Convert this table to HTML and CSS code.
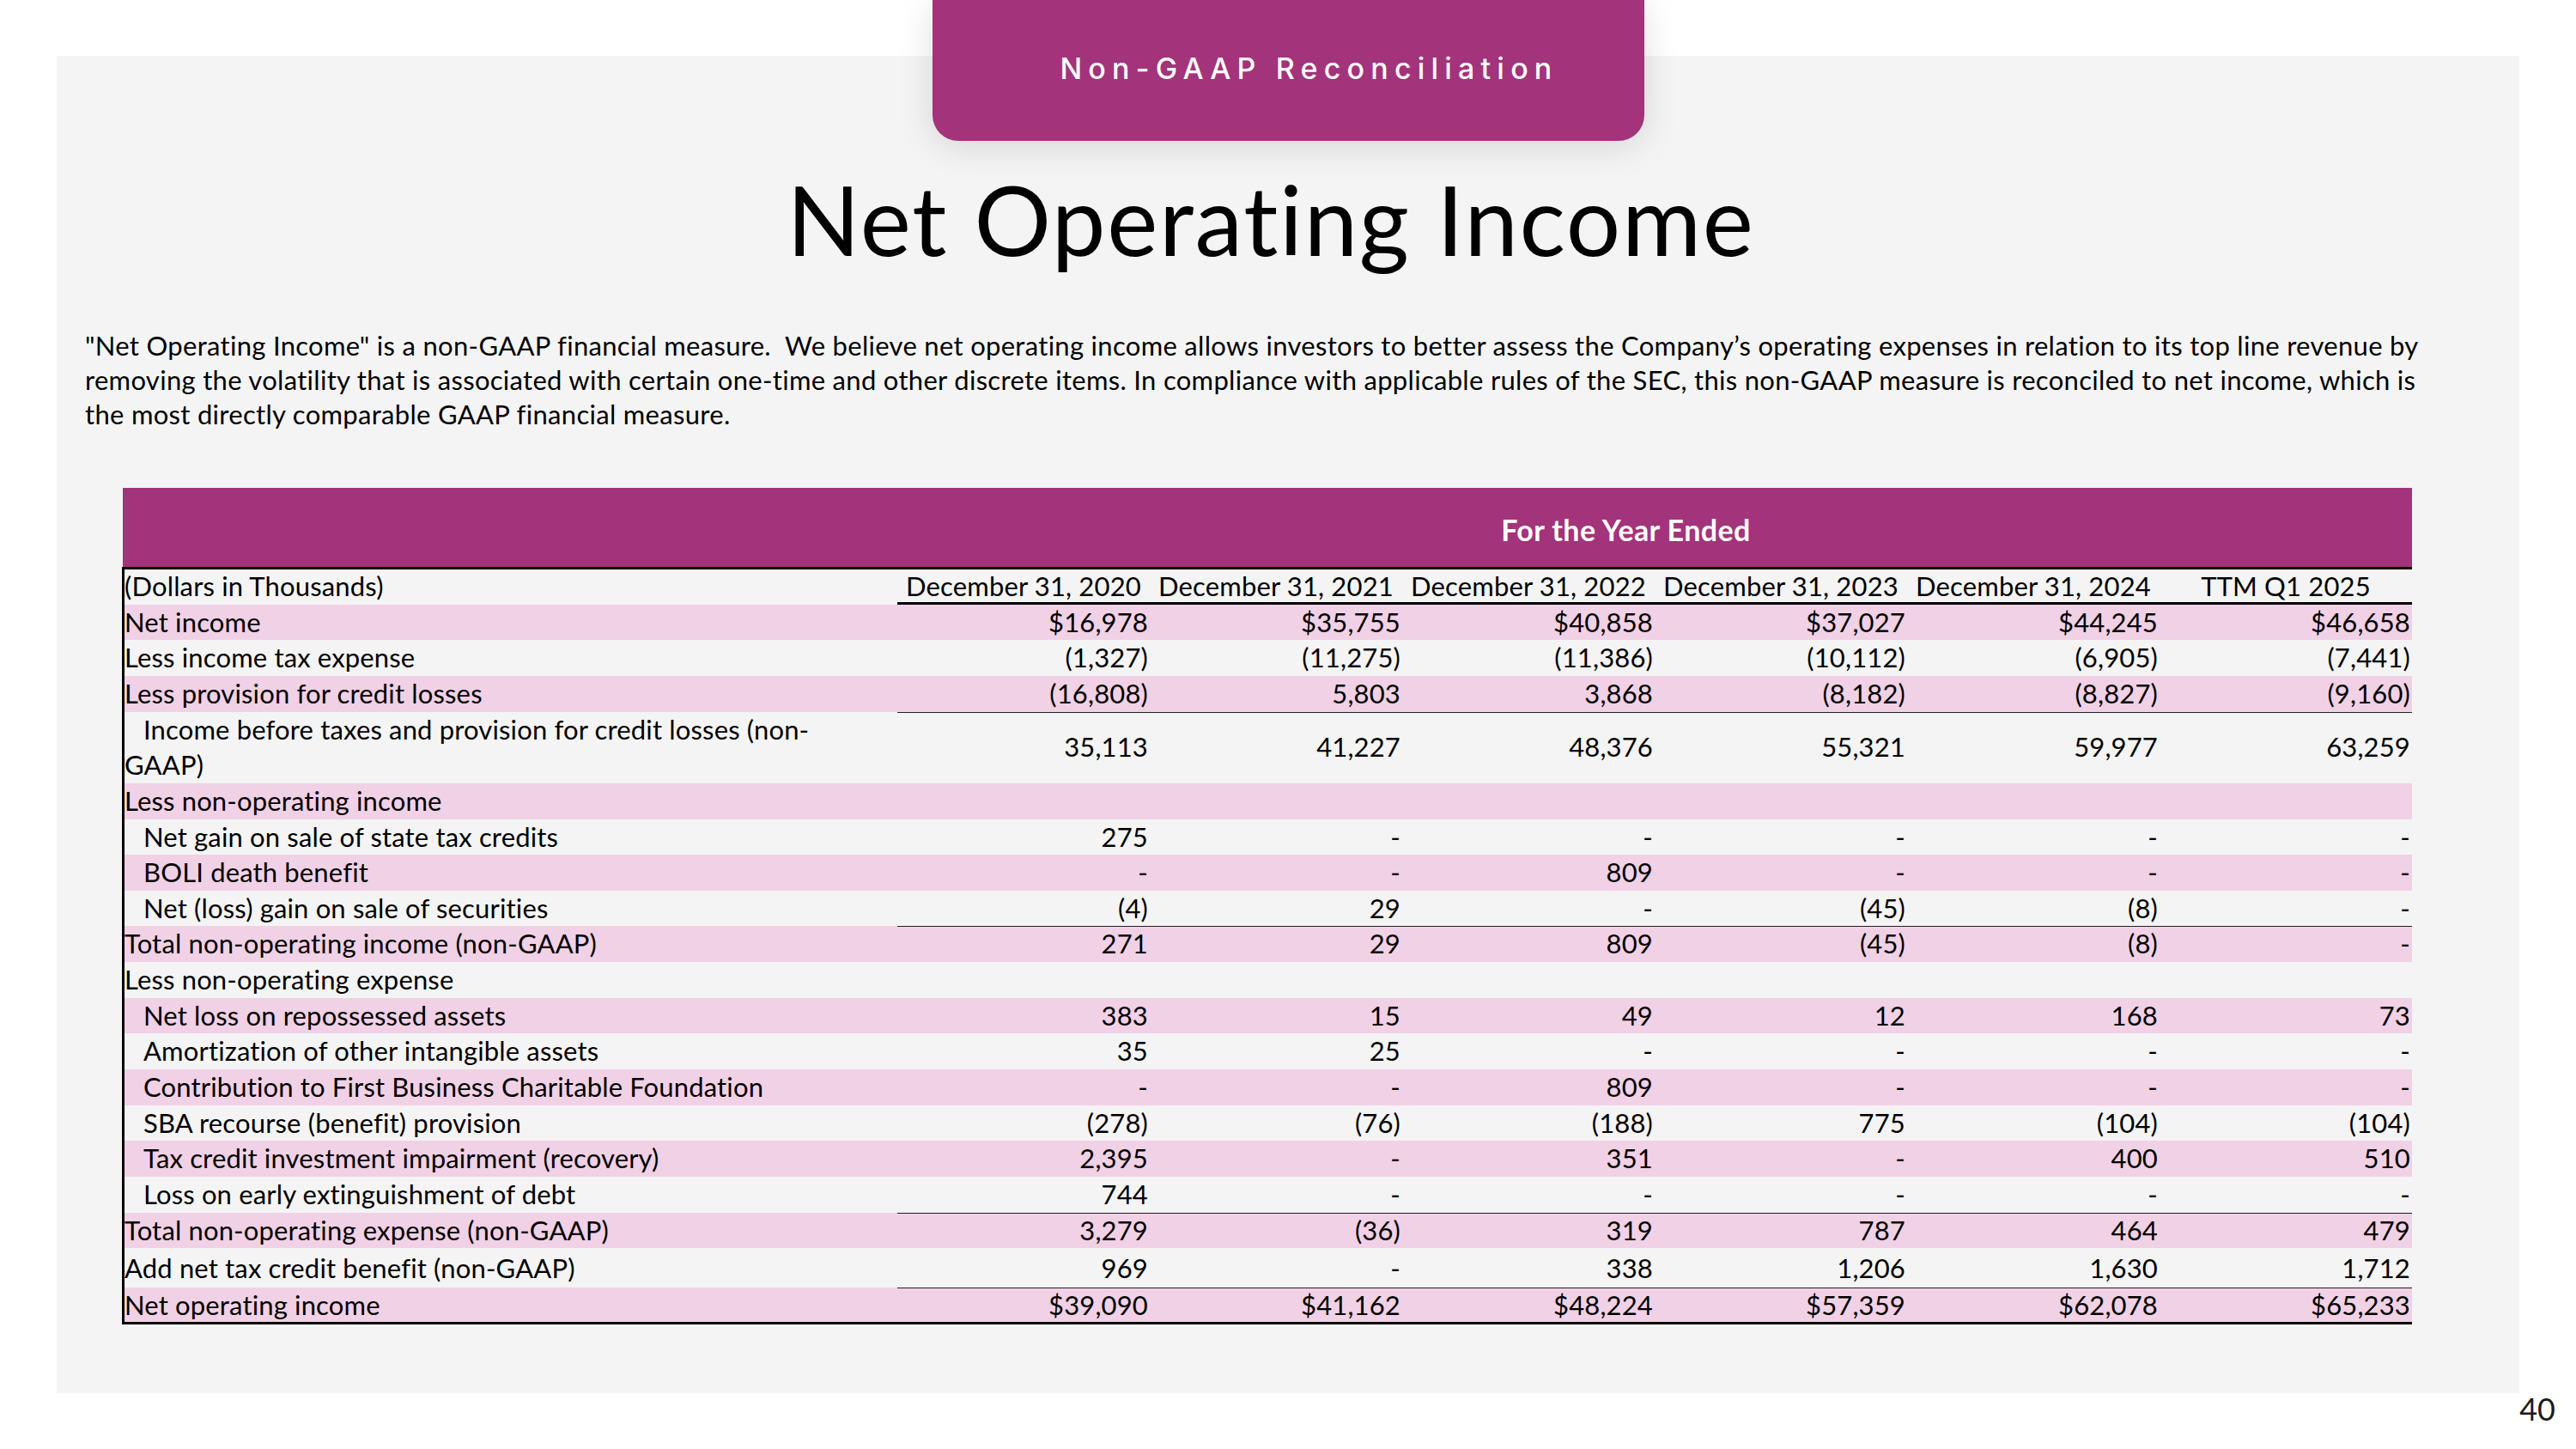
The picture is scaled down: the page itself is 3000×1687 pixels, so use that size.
FILE: index.html
```html
<!DOCTYPE html>
<html lang="en">
<head>
<meta charset="utf-8">
<title>Net Operating Income</title>
<link rel="stylesheet" href="styles.css">
</head>
<body>
<div class="slide">
  <div class="tab"><span class="tab-text">Non-GAAP Reconciliation</span></div>
  <section class="panel">
    <h1 class="title">Net Operating Income</h1>
    <p class="intro">"Net Operating Income" is a non-GAAP financial measure.&nbsp; We believe net operating income allows investors to better assess the Company’s operating expenses in relation to its top line revenue by<br>removing the volatility that is associated with certain one-time and other discrete items. In compliance with applicable rules of the SEC, this non-GAAP measure is reconciled to net income, which is<br>the most directly comparable GAAP financial measure.</p>
    <div class="recon">
      <div class="recon-band"><div class="band-title">For the Year Ended</div></div>
      <div class="recon-body">
        <div class="row cols">
          <div class="lbl">(Dollars in Thousands)</div>
          <div class="hdr">December 31, 2020</div>
          <div class="hdr">December 31, 2021</div>
          <div class="hdr">December 31, 2022</div>
          <div class="hdr">December 31, 2023</div>
          <div class="hdr">December 31, 2024</div>
          <div class="hdr">TTM Q1 2025</div>
        </div>
        <div class="row pink">
          <div class="lbl">Net income</div>
          <div class="num">$16,978</div><div class="num">$35,755</div><div class="num">$40,858</div><div class="num">$37,027</div><div class="num">$44,245</div><div class="num">$46,658</div>
        </div>
        <div class="row">
          <div class="lbl">Less income tax expense</div>
          <div class="num">(1,327)</div><div class="num">(11,275)</div><div class="num">(11,386)</div><div class="num">(10,112)</div><div class="num">(6,905)</div><div class="num">(7,441)</div>
        </div>
        <div class="row pink ul">
          <div class="lbl">Less provision for credit losses</div>
          <div class="num">(16,808)</div><div class="num">5,803</div><div class="num">3,868</div><div class="num">(8,182)</div><div class="num">(8,827)</div><div class="num">(9,160)</div>
        </div>
        <div class="row tall">
          <div class="lbl wrap">Income before taxes and provision for credit losses (non-<br>GAAP)</div>
          <div class="num">35,113</div><div class="num">41,227</div><div class="num">48,376</div><div class="num">55,321</div><div class="num">59,977</div><div class="num">63,259</div>
        </div>
        <div class="row pink">
          <div class="lbl">Less non-operating income</div>
          <div class="num"></div><div class="num"></div><div class="num"></div><div class="num"></div><div class="num"></div><div class="num"></div>
        </div>
        <div class="row">
          <div class="lbl ind">Net gain on sale of state tax credits</div>
          <div class="num">275</div><div class="num">-</div><div class="num">-</div><div class="num">-</div><div class="num">-</div><div class="num">-</div>
        </div>
        <div class="row pink">
          <div class="lbl ind">BOLI death benefit</div>
          <div class="num">-</div><div class="num">-</div><div class="num">809</div><div class="num">-</div><div class="num">-</div><div class="num">-</div>
        </div>
        <div class="row ul">
          <div class="lbl ind">Net (loss) gain on sale of securities</div>
          <div class="num">(4)</div><div class="num">29</div><div class="num">-</div><div class="num">(45)</div><div class="num">(8)</div><div class="num">-</div>
        </div>
        <div class="row pink">
          <div class="lbl">Total non-operating income (non-GAAP)</div>
          <div class="num">271</div><div class="num">29</div><div class="num">809</div><div class="num">(45)</div><div class="num">(8)</div><div class="num">-</div>
        </div>
        <div class="row">
          <div class="lbl">Less non-operating expense</div>
          <div class="num"></div><div class="num"></div><div class="num"></div><div class="num"></div><div class="num"></div><div class="num"></div>
        </div>
        <div class="row pink">
          <div class="lbl ind">Net loss on repossessed assets</div>
          <div class="num">383</div><div class="num">15</div><div class="num">49</div><div class="num">12</div><div class="num">168</div><div class="num">73</div>
        </div>
        <div class="row">
          <div class="lbl ind">Amortization of other intangible assets</div>
          <div class="num">35</div><div class="num">25</div><div class="num">-</div><div class="num">-</div><div class="num">-</div><div class="num">-</div>
        </div>
        <div class="row pink">
          <div class="lbl ind">Contribution to First Business Charitable Foundation</div>
          <div class="num">-</div><div class="num">-</div><div class="num">809</div><div class="num">-</div><div class="num">-</div><div class="num">-</div>
        </div>
        <div class="row">
          <div class="lbl ind">SBA recourse (benefit) provision</div>
          <div class="num">(278)</div><div class="num">(76)</div><div class="num">(188)</div><div class="num">775</div><div class="num">(104)</div><div class="num">(104)</div>
        </div>
        <div class="row pink">
          <div class="lbl ind">Tax credit investment impairment (recovery)</div>
          <div class="num">2,395</div><div class="num">-</div><div class="num">351</div><div class="num">-</div><div class="num">400</div><div class="num">510</div>
        </div>
        <div class="row ul">
          <div class="lbl ind">Loss on early extinguishment of debt</div>
          <div class="num">744</div><div class="num">-</div><div class="num">-</div><div class="num">-</div><div class="num">-</div><div class="num">-</div>
        </div>
        <div class="row pink">
          <div class="lbl">Total non-operating expense (non-GAAP)</div>
          <div class="num">3,279</div><div class="num">(36)</div><div class="num">319</div><div class="num">787</div><div class="num">464</div><div class="num">479</div>
        </div>
        <div class="row ul add">
          <div class="lbl">Add net tax credit benefit (non-GAAP)</div>
          <div class="num">969</div><div class="num">-</div><div class="num">338</div><div class="num">1,206</div><div class="num">1,630</div><div class="num">1,712</div>
        </div>
        <div class="row pink last">
          <div class="lbl">Net operating income</div>
          <div class="num">$39,090</div><div class="num">$41,162</div><div class="num">$48,224</div><div class="num">$57,359</div><div class="num">$62,078</div><div class="num">$65,233</div>
        </div>
      </div>
    </div>
  </section>
  <div class="page-num">40</div>
</div>
</body>
</html>
```

FILE: styles.css
```css
* {
  box-sizing: border-box;
}

html,
body {
  margin: 0;
  padding: 0;
  background: #ffffff;
}

body {
  width: 3000px;
  height: 1687px;
  overflow: hidden;
  font-family: Lato, "Open Sans", sans-serif;
  font-variant-ligatures: none;
  font-feature-settings: "liga" 0, "clig" 0;
  color: #000000;
}

.slide {
  position: relative;
  width: 3000px;
  height: 1687px;
  padding-top: 65px;
}

/* top tab */
.tab {
  position: absolute;
  top: 0;
  left: 1086px;
  width: 829px;
  height: 164px;
  background: #a3337a;
  border-radius: 0 0 30px 30px;
  box-shadow: 0 6px 40px rgba(0, 0, 0, 0.13);
  z-index: 2;
  display: flex;
  align-items: center;
  justify-content: center;
  padding: 0 0 6px 48px;
}

.tab-text {
  font-family: Inter, "Noto Sans", sans-serif;
  font-weight: 500;
  font-size: 34px;
  letter-spacing: 7.2px;
  color: #ffffff;
  white-space: nowrap;
}

/* grey panel */
.panel {
  margin: 0 66px;
  height: 1557px;
  background: #f4f4f4;
  padding-top: 125px;
}

.title {
  margin: 0;
  padding-right: 40px;
  text-align: center;
  font-family: Lato, "Open Sans", sans-serif;
  font-weight: 400;
  font-size: 112px;
  letter-spacing: 1.7px;
  line-height: 129.6px;
}

.intro {
  margin: 62px 0 0;
  padding-left: 33px;
  font-size: 31px;
  letter-spacing: 0.3px;
  line-height: 40px;
  white-space: nowrap;
}

/* reconciliation table */
.recon {
  margin: 66px 0 0 77px;
  width: 2666px;
}

.recon-band {
  height: 92px;
  background: #a3337a;
  display: grid;
  grid-template-columns: 903px 1fr;
}

.band-title {
  grid-column: 2;
  display: flex;
  align-items: center;
  justify-content: center;
  padding: 6px 68px 0 0;
  color: #ffffff;
  font-weight: 700;
  font-size: 34px;
  letter-spacing: 0.4px;
}

.recon-body {
  margin-left: -1px;
  border-top: 3px solid #000000;
  border-bottom: 3px solid #000000;
  border-left: 3px solid #000000;
}

.row {
  display: grid;
  grid-template-columns: 900px repeat(6, 294px);
  height: 41.65px;
  line-height: 41.65px;
  font-size: 31px;
  letter-spacing: 0.15px;
}

.row.pink {
  background: #f1d1e5;
}

.row.cols {
  height: 41px;
  line-height: 38px;
}

.row.tall {
  height: 83.4px;
}

.row.add {
  height: 46px;
  line-height: 46px;
}

.row.last {
  height: 40px;
  line-height: 40px;
}

.lbl {
  white-space: nowrap;
}

.lbl.ind {
  padding-left: 22px;
}

.lbl.wrap {
  text-indent: 22px;
  line-height: 41.65px;
}

.hdr {
  text-align: center;
  white-space: nowrap;
  border-bottom: 3px solid #000000;
}

.num {
  text-align: right;
  padding-right: 2px;
  white-space: nowrap;
}

.row.tall .num {
  align-self: center;
}

.row.ul .num {
  border-bottom: 1px solid #222222;
}

.page-num {
  padding-right: 24px;
  text-align: right;
  font-size: 36px;
  line-height: 36px;
  color: #1a1a1a;
}
```
